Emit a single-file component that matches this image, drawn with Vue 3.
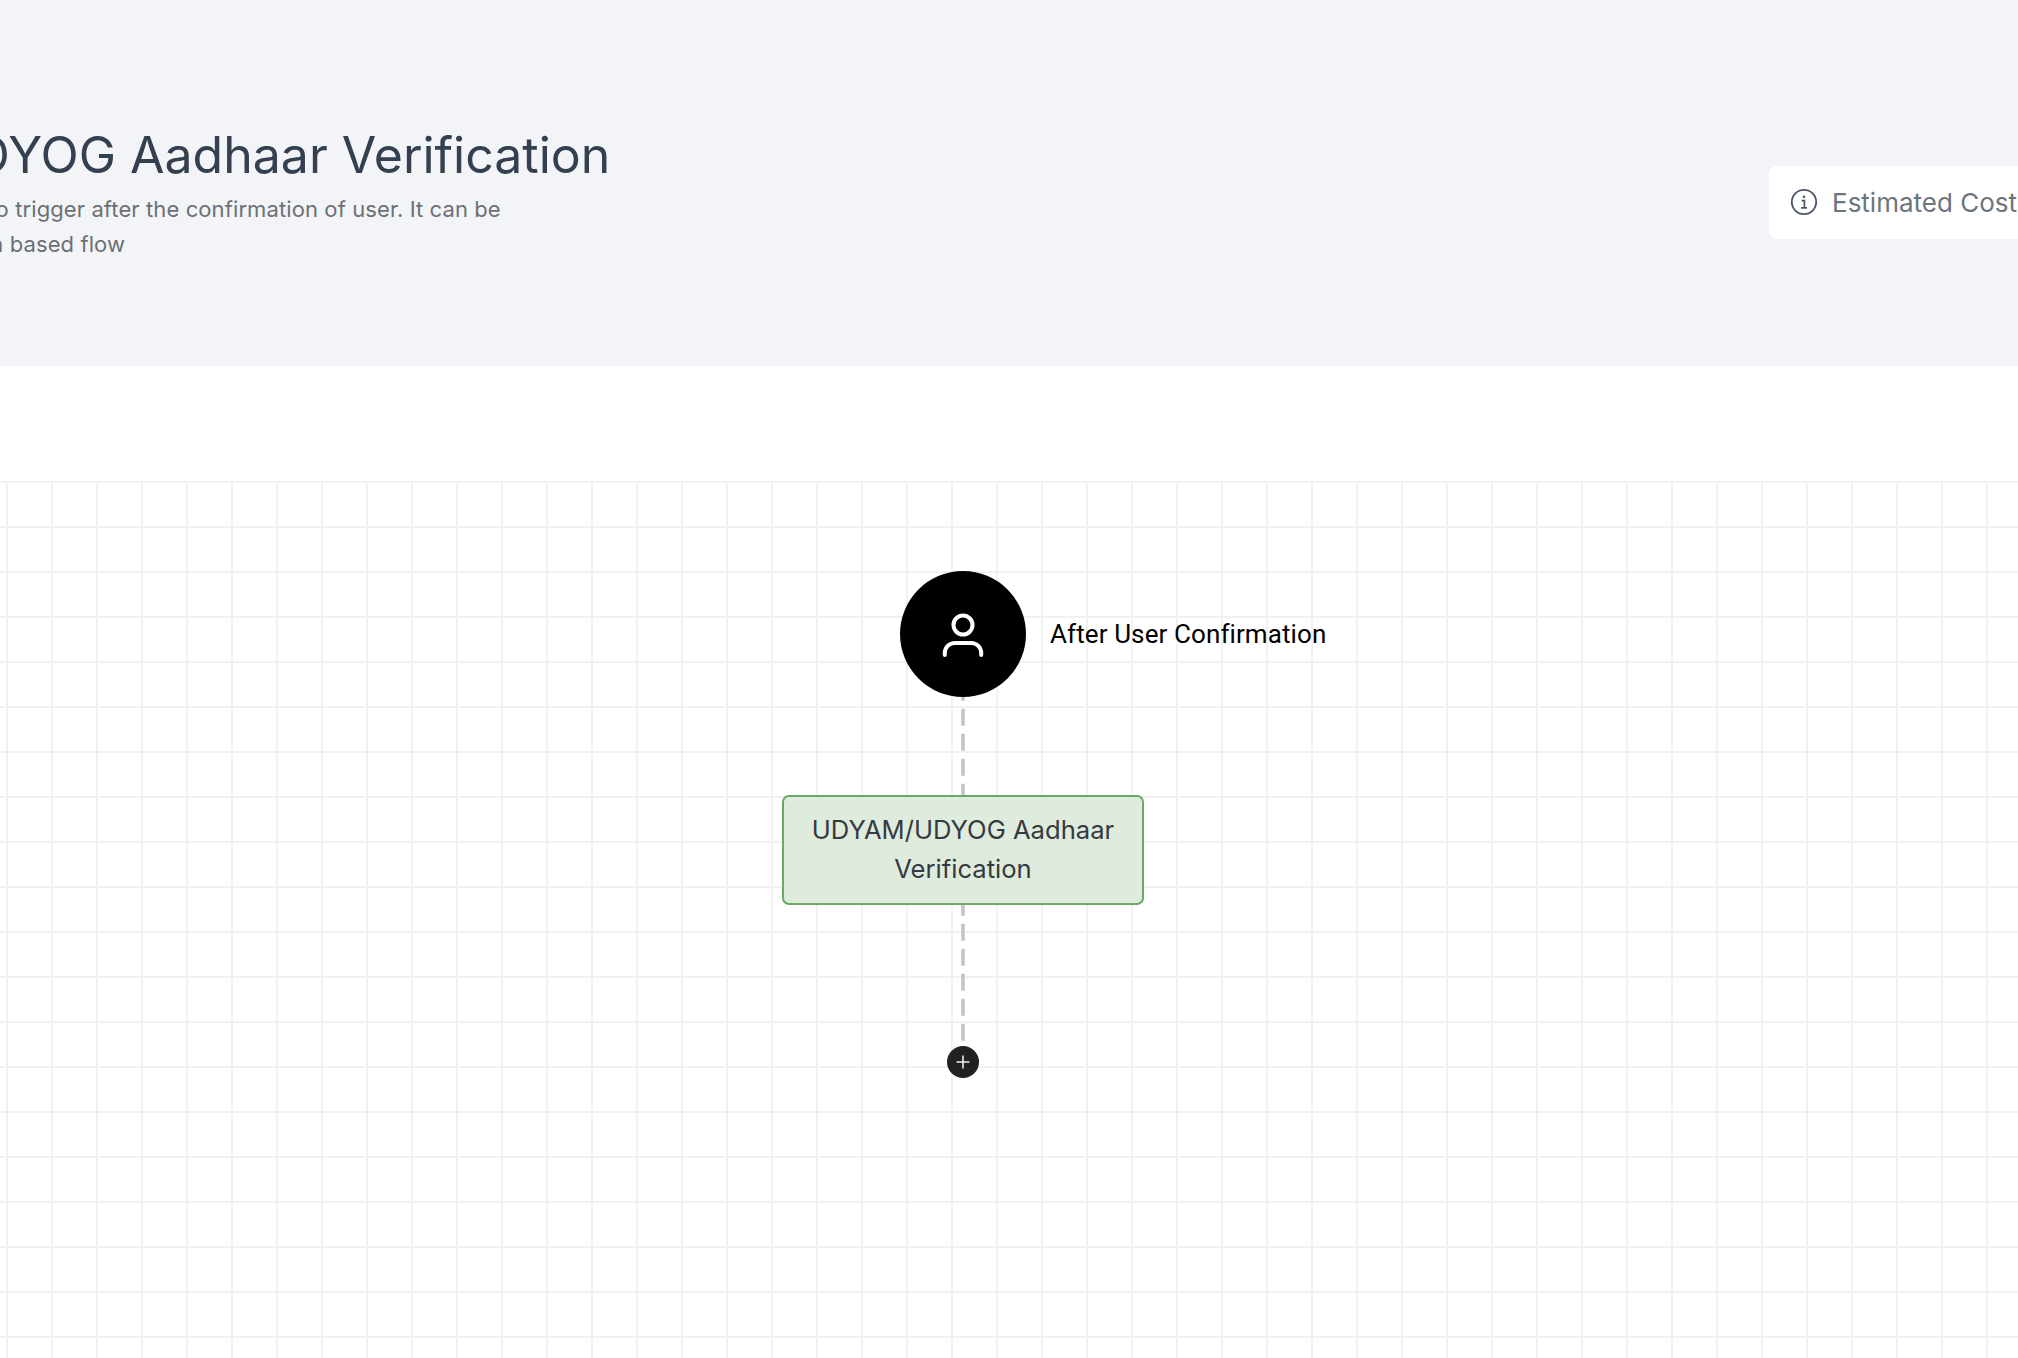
<template>
  <div class="page">
    <header class="top">
      <div class="intro">
        <h1 class="title">UDYAM/UDYOG Aadhaar Verification</h1>
        <p class="desc">
          <span class="line first">A flow to trigger after the confirmation of user. It can be</span>
          <span class="line second">used for verification based flow</span>
        </p>
      </div>
      <div class="cost">
        <svg class="info" viewBox="0 0 28 28" fill="none" stroke="#4a5568">
          <circle cx="14" cy="14" r="12.2" stroke-width="1.8" />
          <circle cx="14" cy="8.8" r="1.3" fill="#4a5568" stroke="none" />
          <path d="M11.6 12.6H14.4V19.6M11 19.8H17" stroke-width="1.7" />
        </svg>
        <span class="cost-text">Estimated Cost: ₹0</span>
      </div>
    </header>

    <div class="gap"></div>

    <section class="canvas">
      <svg class="wires" width="8" height="360">
        <path d="M4 -12.3V99" class="wire" />
        <path d="M4 202.7V346.7" class="wire" />
      </svg>

      <div class="trigger">
        <div class="trigger-dot">
          <svg viewBox="0 0 48 48" width="48" height="48" fill="none" stroke="#fff" stroke-width="4" stroke-linecap="round">
            <circle cx="24" cy="15" r="9.5" />
            <path d="M5.8 45V43A10 10 0 0 1 15.8 33H32.2A10 10 0 0 1 42.2 43V45" />
          </svg>
        </div>
        <span class="trigger-label">After User Confirmation</span>
      </div>

      <div class="step">UDYAM/UDYOG Aadhaar Verification</div>

      <button class="add" type="button" aria-label="Add step">
        <svg viewBox="0 0 16 16" width="16" height="16" stroke="#eee" stroke-width="1.6">
          <path d="M8 1.5V14.5M1.5 8H14.5" />
        </svg>
      </button>
    </section>
  </div>
</template>

<script setup>
</script>

<style>
html, body {
  overflow: hidden;
}
</style>

<style scoped>
.page {
  width: 2018px;
  height: 1358px;
  overflow: hidden;
  display: flex;
  flex-direction: column;
  background: #fff;
  font-family: Inter, "Liberation Sans", sans-serif;
}

.top {
  height: 366px;
  flex-shrink: 0;
  display: flex;
  align-items: center;
  justify-content: space-between;
  padding-top: 40px;
  box-sizing: border-box;
  background: #f2f4f8;
}

.intro {
  margin-left: -263px;
  margin-top: -20px;
  white-space: nowrap;
}

.title {
  margin: 0;
  font-size: 50px;
  font-weight: 400;
  line-height: 60px;
  color: #344050;
}

.desc {
  margin: 7px 0 0 179px;
  font-size: 22px;
  letter-spacing: 0.1px;
  line-height: 35px;
  color: #6c7075;
}

.line {
  display: block;
}

.second {
  margin-left: -123px;
}

.cost {
  flex-shrink: 0;
  display: flex;
  align-items: center;
  gap: 14px;
  width: 300px;
  height: 73px;
  margin: 0 -51px 2px 0;
  padding-left: 21px;
  box-sizing: border-box;
  background: #fff;
  border-radius: 8px;
  white-space: nowrap;
}

.info {
  width: 28px;
  height: 28px;
  flex-shrink: 0;
  margin-bottom: 1px;
}

.cost-text {
  font-size: 26px;
  color: #6c757d;
}

.gap {
  height: 115px;
  flex-shrink: 0;
}

.canvas {
  position: relative;
  flex: 1;
  background-color: #fff;
  background-image:
    linear-gradient(#f1f1f1 2px, transparent 2px),
    linear-gradient(90deg, #f1f1f1 2px, transparent 2px);
  background-size: 45px 45px;
  background-position: 6px 0;
}

.wires {
  position: absolute;
  left: 959px;
  top: 215px;
  overflow: visible;
}

.wire {
  fill: none;
  stroke: #c4c4c4;
  stroke-width: 3.5;
  stroke-dasharray: 17 8;
}

.trigger {
  position: absolute;
  left: 900px;
  top: 90px;
  display: flex;
  align-items: center;
  gap: 24px;
}

.trigger-dot {
  width: 126px;
  height: 126px;
  border-radius: 50%;
  background: #000;
  display: flex;
  align-items: center;
  justify-content: center;
}

.trigger-label {
  font-family: Roboto, Inter, sans-serif;
  font-size: 26px;
  letter-spacing: 0.1px;
  color: #000;
  white-space: nowrap;
}

.step {
  position: absolute;
  left: 782px;
  top: 314px;
  width: 362px;
  height: 110px;
  padding: 12.5px 20px;
  box-sizing: border-box;
  border: 2px solid #6aa964;
  border-radius: 7px;
  background: #deebdd;
  color: #343a40;
  font-size: 25.6px;
  line-height: 39px;
  text-align: center;
}

.add {
  position: absolute;
  left: 947px;
  top: 565px;
  width: 32px;
  height: 32px;
  padding: 0;
  border: none;
  border-radius: 50%;
  background: #212121;
  display: flex;
  align-items: center;
  justify-content: center;
}
</style>
